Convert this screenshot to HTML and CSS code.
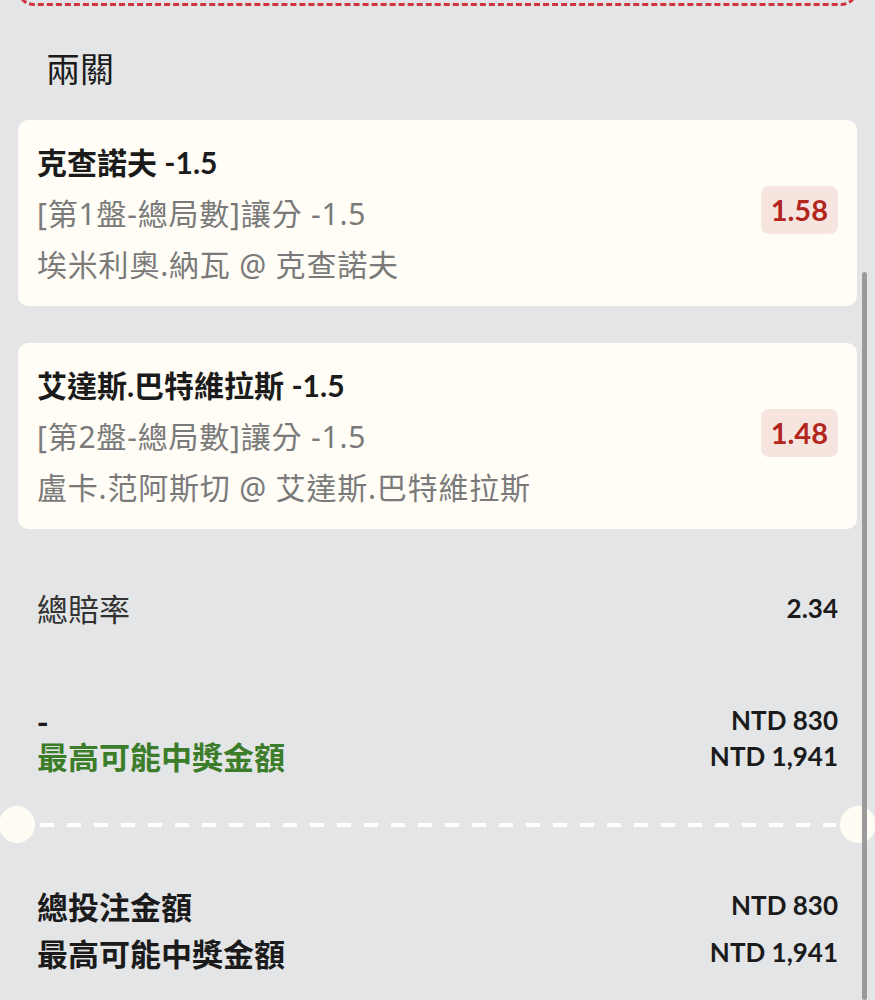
FILE: index.html
```html
<!DOCTYPE html>
<html lang="zh-Hant">
<head>
    <meta charset="UTF-8">
    <meta name="viewport" content="width=device-width, initial-scale=1.0">
    <title>兩關</title>
    <link rel="stylesheet" href="styles.css">
</head>
<body>

<div class="page">
    <div class="promo-box"></div>

    <h2 class="leg-title">兩關</h2>

    <div class="bet-list">
        <div class="bet-card">
            <div class="bet-info">
                <div class="bet-pick">克查諾夫 -1.5</div>
                <div class="bet-line">[第1盤-總局數]讓分 -1.5</div>
                <div class="bet-line">埃米利奧.納瓦 @ 克查諾夫</div>
            </div>
            <div class="odds">1.58</div>
        </div>

        <div class="bet-card">
            <div class="bet-info">
                <div class="bet-pick">艾達斯.巴特維拉斯 -1.5</div>
                <div class="bet-line">[第2盤-總局數]讓分 -1.5</div>
                <div class="bet-line">盧卡.范阿斯切 @ 艾達斯.巴特維拉斯</div>
            </div>
            <div class="odds">1.48</div>
        </div>
    </div>

    <div class="summary-row total-odds">
        <span class="label">總賠率</span>
        <span class="value">2.34</span>
    </div>

    <div class="stake-block">
        <div class="summary-row">
            <span class="label strong">-</span>
            <span class="value">NTD 830</span>
        </div>
        <div class="summary-row">
            <span class="label strong win">最高可能中獎金額</span>
            <span class="value">NTD 1,941</span>
        </div>
    </div>

    <div class="ticket-divider">
        <span class="notch notch-left"></span>
        <span class="dash-line"></span>
        <span class="notch notch-right"></span>
    </div>

    <div class="totals">
        <div class="summary-row">
            <span class="label strong">總投注金額</span>
            <span class="value">NTD 830</span>
        </div>
        <div class="summary-row">
            <span class="label strong">最高可能中獎金額</span>
            <span class="value">NTD 1,941</span>
        </div>
    </div>
</div>

<div class="scroll-thumb"></div>

</body>
</html>
```

FILE: styles.css
```css
body {
    margin: 0;
    background-color: #e4e5e7;
    font-family: Lato, "Noto Sans CJK TC", sans-serif;
    color: #1b1b1b;
    overflow: hidden;
}

.page {
    padding: 0 18px;
}

/* bottom edge of the box above, mostly scrolled away */
.promo-box {
    box-sizing: border-box;
    height: 30px;
    margin-top: -24px;
    border: 3px dashed #d1343f;
    border-radius: 16px;
}

.leg-title {
    margin: 42px 0 32px;
    padding-left: 28px;
    font-family: "Noto Sans CJK TC", sans-serif;
    font-size: 34px;
    font-weight: 400;
    line-height: 40px;
}

.bet-list {
    display: flex;
    flex-direction: column;
    gap: 37px;
}

.bet-card {
    display: flex;
    align-items: center;
    justify-content: space-between;
    padding: 17px 19px 16px;
    border-radius: 10px;
    background-color: #fffdf5;
}

.bet-info {
    font-size: 30px;
    line-height: 51px;
}

.bet-pick {
    font-weight: 700;
}

.bet-line {
    font-family: "Noto Sans", "Noto Sans CJK TC", sans-serif;
    color: #7a7a7a;
    letter-spacing: 0.8px;
}

.odds {
    margin-bottom: 8px;
    padding: 0 10px;
    height: 48px;
    line-height: 48px;
    border-radius: 8px;
    background-color: #f6e5de;
    color: #b3261e;
    font-size: 29px;
    font-weight: 700;
}

.summary-row {
    display: flex;
    justify-content: space-between;
    align-items: center;
    padding: 0 19px;
}

.label {
    font-family: "Noto Sans CJK TC", sans-serif;
    font-size: 31px;
    color: #333;
}

.label.strong {
    font-weight: 700;
    color: #1b1b1b;
}

.label.win {
    color: #3c7d2a;
}

.value {
    font-size: 26px;
    font-weight: 700;
}

.total-odds {
    margin-top: 59px;
    line-height: 40px;
}

.stake-block {
    margin-top: 74px;
    line-height: 36px;
}

.ticket-divider {
    display: flex;
    align-items: center;
    margin: 32px -18px 0;
    height: 37px;
}

.notch {
    flex: none;
    width: 36px;
    height: 37px;
    border-radius: 50%;
    background-color: #fffdf3;
}

.notch-left {
    margin-left: -1px;
}

.notch-right {
    margin-right: -1px;
}

.dash-line {
    flex: 1;
    height: 4px;
    margin: 0 4px 0 5px;
    background: repeating-linear-gradient(to right, #ffffff 0 14px, transparent 14px 27px);
}

.totals {
    margin-top: 39px;
    line-height: 47px;
}

.scroll-thumb {
    position: fixed;
    top: 272px;
    left: 862px;
    width: 5px;
    height: 728px;
    border-radius: 3px;
    background-color: #9b9b9b;
}
```
